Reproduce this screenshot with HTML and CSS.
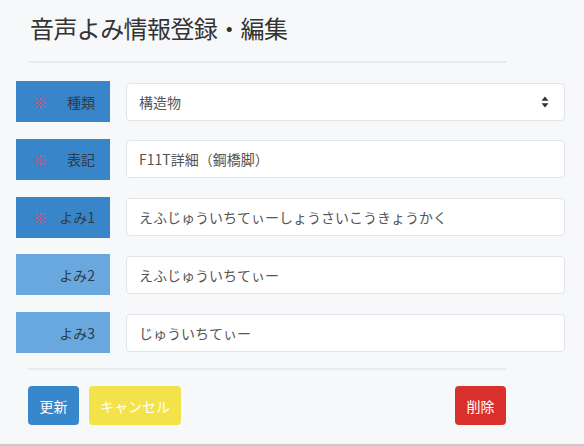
FILE: index.html
```html
<!DOCTYPE html>
<html lang="ja">
<head>
<meta charset="utf-8">
<link rel="stylesheet" href="styles.css">
</head>
<body>
<div class="page">
  <div class="header">
    <h1 class="title">音声よみ情報登録・編集</h1>
  </div>
  <div class="form">
    <div class="row">
      <div class="label req"><span class="mark">※</span><span class="ltext">種類</span></div>
      <div class="field select"><span class="value">構造物</span>
        <svg class="arrow" width="8" height="12" viewBox="0 0 8 12"><path d="M4 0.5 L7.5 4.8 L0.5 4.8 Z M4 11.5 L7.5 7.2 L0.5 7.2 Z" fill="#333"/></svg>
      </div>
    </div>
    <div class="row">
      <div class="label req"><span class="mark">※</span><span class="ltext">表記</span></div>
      <div class="field"><span class="value">F11T詳細（鋼橋脚）</span></div>
    </div>
    <div class="row">
      <div class="label req"><span class="mark">※</span><span class="ltext">よみ1</span></div>
      <div class="field"><span class="value">えふじゅういちてぃーしょうさいこうきょうかく</span></div>
    </div>
    <div class="row">
      <div class="label opt"><span class="ltext">よみ2</span></div>
      <div class="field"><span class="value">えふじゅういちてぃー</span></div>
    </div>
    <div class="row">
      <div class="label opt"><span class="ltext">よみ3</span></div>
      <div class="field"><span class="value">じゅういちてぃー</span></div>
    </div>
  </div>
  <div class="footer">
    <div class="btns">
      <button class="btn blue">更新</button>
      <button class="btn yellow">キャンセル</button>
    </div>
    <button class="btn red">削除</button>
  </div>
</div>
</body>
</html>
```
FILE: styles.css
```css
html, body {
  margin: 0;
  padding: 0;
}
body {
  background: #f7f8fa;
  font-family: "Noto Sans CJK JP", "Noto Sans", sans-serif;
  color: #333;
}
.page {
  height: 444px;
  border-bottom: 2px solid #c9c9c9;
  box-sizing: content-box;
  overflow: hidden;
}
.header {
  margin: 0 78px 0 28px;
  padding-top: 12px;
  border-bottom: 2px solid #e9eaec;
  height: 49px;
}
.title {
  margin: 0 0 0 2px;
  font-size: 24px;
  font-weight: normal;
  line-height: 32px;
  color: #333;
  letter-spacing: -0.6px;
}
.form {
  margin: 18px 19px 0 16px;
  display: flex;
  flex-direction: column;
  gap: 16.8px;
  padding-bottom: 15px;
}
.row {
  display: flex;
  align-items: center;
  gap: 16px;
  height: 41px;
}
.label {
  width: 94px;
  height: 41px;
  box-sizing: border-box;
  display: flex;
  align-items: center;
  padding: 0 15px 0 17px;
  font-size: 14px;
  color: #2d3a47;
  flex-shrink: 0;
}
.label.req { background: #3886c9; }
.label.opt { background: #68a8de; }
.mark {
  color: #e24a62;
  font-size: 14px;
}
.ltext { margin-left: auto; }
.field {
  flex: 1;
  height: 38px;
  box-sizing: border-box;
  background: #fff;
  border: 1px solid #e2e4e7;
  border-radius: 4px;
  display: flex;
  align-items: center;
  padding: 0 12px;
  font-size: 14px;
  color: #555;
}
.select {
  justify-content: space-between;
  padding-right: 15px;
}
.arrow { display: block; }
.footer {
  margin: 0 78px 0 28px;
  border-top: 2px solid #e9eaec;
  padding-top: 16px;
  display: flex;
  justify-content: space-between;
}
.btns {
  display: flex;
  gap: 10px;
}
.btn {
  height: 39px;
  border: 0;
  border-radius: 4px;
  font-family: "Noto Sans CJK JP", "Noto Sans", sans-serif;
  font-size: 14px;
  color: #fff;
  padding: 0;
  white-space: nowrap;
}
.btn.blue { background: #3886cb; width: 51px; }
.btn.yellow { background: #f4e24a; width: 92px; }
.btn.red { background: #d9302e; width: 51px; }
```
